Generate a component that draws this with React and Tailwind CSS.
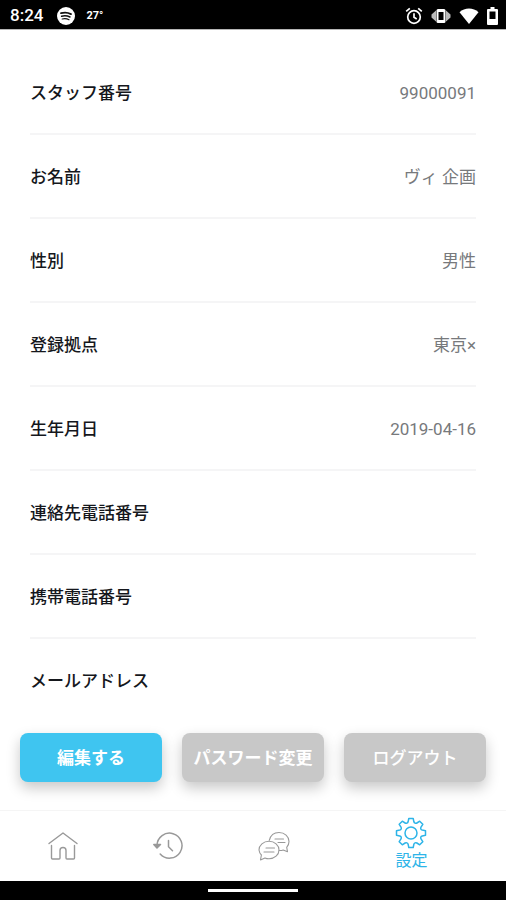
import React from 'react';

const profile = [
  { label: 'スタッフ番号', value: '99000091' },
  { label: 'お名前', value: 'ヴィ 企画' },
  { label: '性別', value: '男性' },
  { label: '登録拠点', value: '東京×' },
  { label: '生年月日', value: '2019-04-16' },
  { label: '連絡先電話番号', value: '' },
  { label: '携帯電話番号', value: '' },
  { label: 'メールアドレス', value: '' },
];

const StatusBar = () => (
  <header className="flex h-[30px] items-center justify-between border-b border-[#b5b5b5] bg-black pl-[10px] pr-2 pt-0.5 text-white">
    <div className="flex items-center">
      <span className="text-[17px] font-medium leading-none">8:24</span>
      <svg className="ml-[14px]" width="18" height="18" viewBox="0 0 18 18" fill="none" stroke="#111" strokeLinecap="round">
        <circle cx="9" cy="9" r="9" fill="#fff" stroke="none" />
        <path d="M4 6.2c3.5-1 7-.7 10 .9" strokeWidth="1.8" />
        <path d="M4.6 9.2c3-.8 5.8-.5 8.4.8" strokeWidth="1.5" />
        <path d="M5.2 12c2.5-.6 4.7-.4 6.8.7" strokeWidth="1.2" />
      </svg>
      <span className="ml-[11px] text-[11px] font-bold leading-none">27°</span>
    </div>
    <div className="flex items-center gap-2">
      <svg width="18" height="18" viewBox="0 0 18 18" fill="none" stroke="#fff" strokeWidth="1.7">
        <circle cx="9" cy="10" r="6.3" />
        <path d="M9 6.3v4l2.7 1.7M1.2 4.3l3.6-3M16.8 4.3l-3.6-3" />
      </svg>
      <svg width="20" height="16" viewBox="0 0 20 16" fill="#fff">
        <path d="M5 2.5v11L.5 9.500v-3zM15 2.500v11l4.500-4v-3z" fill="#bbb" />
        <rect x="5.5" y="1" width="9" height="14" rx="1.5" />
        <rect x="7.5" y="4" width="5" height="8" fill="#000" />
      </svg>
      <svg width="20" height="16" viewBox="0 0 20 16" fill="#fff">
        <path d="M10 16 .5 4.2C5.7-.6 14.3-.6 19.5 4.2z" />
      </svg>
      <svg width="11" height="18" viewBox="0 0 11 18">
        <path d="M3.5 0h4v2H10a1 1 0 0 1 1 1v14a1 1 0 0 1-1 1H1a1 1 0 0 1-1-1V3a1 1 0 0 1 1-1h2.500z" fill="#fff" />
        <path d="M2.500 4.500h6V12h-6z" fill="#000" />
      </svg>
    </div>
  </header>
);

const HomeIcon = () => (
  <svg width="30" height="28" viewBox="0 0 30 28" fill="none" stroke="currentColor" strokeWidth="1.4" strokeLinecap="round" strokeLinejoin="round">
    <path d="M1 11.5 15 1l14 10.5" />
    <path d="M3.5 13.500V26a1 1 0 0 0 1 1h6.500a1 1 0 0 0 1-1v-7.500a3 3 0 0 1 6 0V26a1 1 0 0 0 1 1h6.500a1 1 0 0 0 1-1V13.500" />
  </svg>
);

const HistoryIcon = () => (
  <svg width="30" height="28" viewBox="0 0 30 28" fill="none" stroke="currentColor" strokeWidth="1.5" strokeLinecap="round" strokeLinejoin="round">
    <path d="M4 13.5A12.5 12.5 0 1 1 7.2 22" />
    <path d="m.8 12.5 3.2 3.500 3.500-3.500z" fill="currentColor" />
    <path d="M15.5 8.500v6.200l4 4" />
  </svg>
);

const ChatIcon = () => (
  <svg width="32" height="30" viewBox="0 0 32 30" fill="none" stroke="currentColor" strokeWidth="1.1" strokeLinecap="round" strokeLinejoin="round">
    <path d="M11.3 9.3C12.500 4.500 16.200 1.500 21 1.500c5.600 0 10 4 10 9 0 2.300-.9 4.300-2.300 5.900l.8 4.300-4.300-1.700c-1.200.4-2.600.6-4 .5" />
    <path d="M11 10.200c5.600 0 10 4 10 8.800s-4.400 8.800-10 8.800c-1.500 0-2.900-.3-4.100-.8L2.500 28.900l.9-4.900A8.400 8.400 0 0 1 1 19c0-4.800 4.400-8.800 10-8.800z" />
    <path d="M17 8h8.500M20 11.500h7M8 17h8.500M6 21h10" />
  </svg>
);

const GearIcon = () => (
  <svg width="32" height="32" viewBox="0 0 32 32" fill="none" stroke="currentColor" strokeWidth="1.5" strokeLinejoin="round">
    <circle cx="16" cy="16" r="6" />
    <path d="M13.8 1.5H18.2L18.9 4.8A2 2 0 0 0 21.9 6L24.7 4.2 27.8 7.3 26 10.1A2 2 0 0 0 27.2 13.1L30.5 13.8V18.2L27.2 18.9A2 2 0 0 0 26 21.9L27.8 24.7 24.7 27.8 21.9 26A2 2 0 0 0 18.9 27.2L18.2 30.5H13.8L13.1 27.2A2 2 0 0 0 10.1 26L7.3 27.8 4.2 24.7 6 21.9A2 2 0 0 0 4.8 18.9L1.5 18.2V13.8L4.8 13.1A2 2 0 0 0 6 10.1L4.2 7.3 7.3 4.2 10.1 6A2 2 0 0 0 13.1 4.800Z" />
  </svg>
);

const ActionButton = ({ children, color }) => (
  <button
    type="button"
    className={`h-[49px] flex-1 whitespace-nowrap rounded-lg pt-0.5 text-[17px] text-white shadow-[0_6px_14px_rgba(0,0,0,0.22)] ${color}`}
  >
    {children}
  </button>
);

export default function App() {
  return (
    <div className="flex min-h-screen flex-col bg-white font-[Roboto,'Noto_Sans_CJK_JP',sans-serif]">
      <StatusBar />

      <main className="flex-1 pt-[21px]">
        <dl className="px-[30px]">
          {profile.map(({ label, value }) => (
            <div key={label} className="flex h-[84px] items-center justify-between border-b-2 border-[#f5f5f6] pt-[3px] text-[17px] last:h-[82px] last:border-b-0">
              <dt className="font-medium text-[#15171c]">{label}</dt>
              <dd className="text-[#77797c]">{value}</dd>
            </div>
          ))}
        </dl>

        <div className="flex gap-5 px-5 pb-7 pt-3">
          <ActionButton color="bg-[#3fc5f0] font-bold">編集する</ActionButton>
          <ActionButton color="bg-[#c8c8c8] font-bold">パスワード変更</ActionButton>
          <ActionButton color="bg-[#c8c8c8] font-medium">ログアウト</ActionButton>
        </div>
      </main>

      <nav className="flex h-[71px] items-center border-t border-[#f5f5f5] px-[10px] text-[#999]">
        <a href="#home" aria-label="ホーム" className="flex flex-1 justify-center">
          <HomeIcon />
        </a>
        <a href="#history" aria-label="履歴" className="flex flex-1 justify-center">
          <HistoryIcon />
        </a>
        <a href="#chat" aria-label="チャット" className="flex flex-1 justify-center">
          <ChatIcon />
        </a>
        <a href="#settings" className="flex flex-[1.6] flex-col items-center gap-0.5 pb-1 text-[#2db4e8]">
          <GearIcon />
          <span className="text-[16px] leading-5">設定</span>
        </a>
      </nav>

      <div className="flex h-[19px] items-center justify-center bg-black">
        <div className="h-[3px] w-[90px] bg-white" />
      </div>
    </div>
  );
}
